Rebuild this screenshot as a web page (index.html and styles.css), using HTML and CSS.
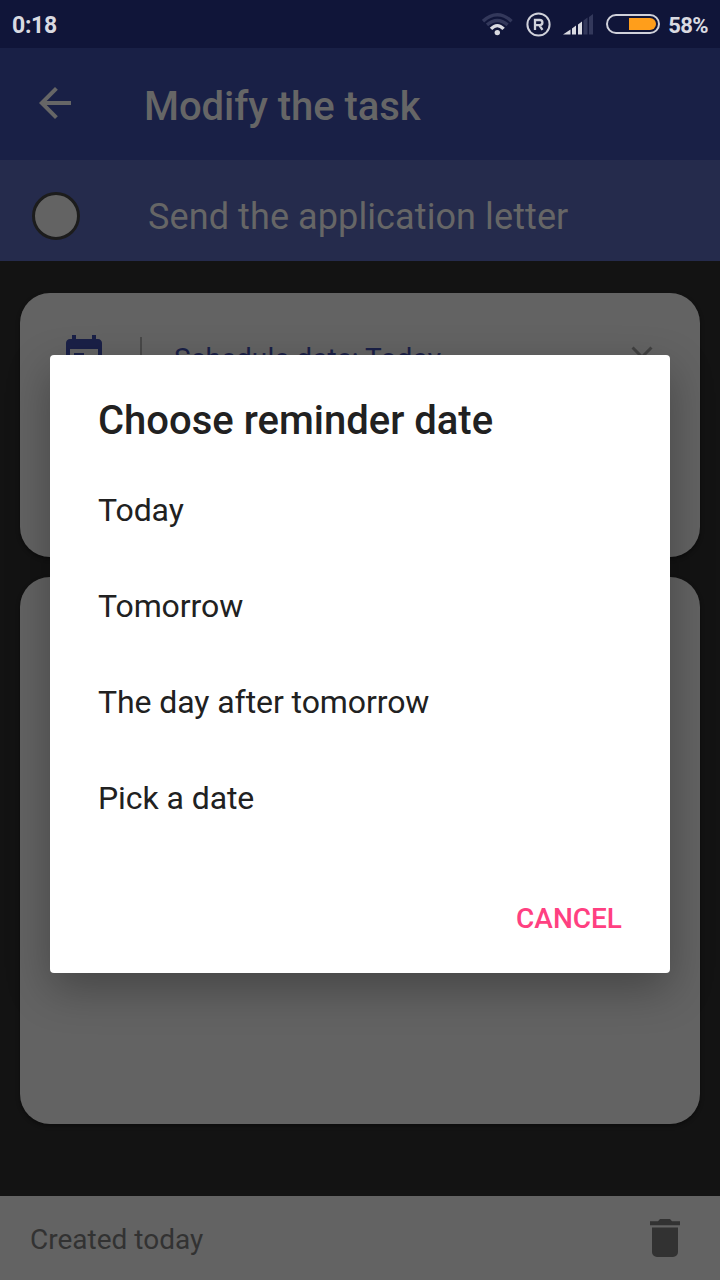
FILE: index.html
```html
<!DOCTYPE html>
<html lang="en">
<head>
<meta charset="utf-8">
<title>Modify the task</title>
<link rel="stylesheet" href="styles.css">
</head>
<body>
<div class="screen">
  <header class="status">
    <span class="clock">0:18</span>
    <div class="indicators">
      <svg class="wifi" width="32" height="24" viewBox="0 0 32 24">
        <g fill="none" stroke-width="3.4">
          <path d="M1 9.200Q15.300-3.600 29.600 9.200" stroke="#33385b"/>
          <path d="M5 12.900Q15.300 4.300 25.600 12.900" stroke="#33385b"/>
          <path d="M9 16.900Q15.300 10.300 21.600 16.900" stroke="#d9dae1"/>
        </g>
        <circle cx="15.300" cy="20.600" r="2.700" fill="#d9dae1"/>
      </svg>
      <svg class="registered" width="26" height="26" viewBox="0 0 26 26" fill="none" stroke="#d0d1da">
        <circle cx="12.500" cy="13.500" r="11.100" stroke-width="2"/>
        <path d="M9 18.900V9h4.700q2.700 0 2.700 2.600t-2.700 2.600H9M13.200 14.200l3.300 4.700" stroke-width="2.300"/>
      </svg>
      <svg class="signal" width="31" height="21" viewBox="0 0 31 21">
        <path d="M0 20.500L7.500 15.500v5zM9 14.500l4-3v9H9zM15 10.500l4-3v13h-4z" fill="#d9dae1"/>
        <path d="M20.500 6.500l4-3v17h-4zM26 3l4-3v20.500h-4z" fill="#33385b"/>
      </svg>
      <svg class="battery" width="54" height="20" viewBox="0 0 54 20">
        <rect x="1" y="1" width="52" height="18" rx="9" fill="none" stroke="#d0d1da" stroke-width="2"/>
        <path d="M23 4h21a6 6 0 0 1 0 12H23z" fill="#ff9e1b"/>
      </svg>
      <span class="percent">58%</span>
    </div>
  </header>
  <div class="appbar">
    <svg class="back" width="48" height="48" viewBox="0 0 24 24"><path fill="#666" d="M20 11H7.830l5.590-5.590L12 4l-8 8 8 8 1.410-1.410L7.830 13H20v-2z"/></svg>
    <h1 class="heading">Modify the task</h1>
  </div>
  <div class="task">
    <span class="check"></span>
    <span class="task-name">Send the application letter</span>
  </div>
  <main class="content">
    <section class="card card-dates">
      <svg class="calendar" width="48" height="48" viewBox="0 0 24 24"><path fill="#1a2047" d="M19 3h-1V1h-2v2H8V1H6v2H5c-1.110 0-2 .9-2 2v14c0 1.100.89 2 2 2h14c1.100 0 2-.9 2-2V5c0-1.100-.9-2-2-2zm0 16H5V8h14v11zM7 10h5v5H7z"/></svg>
      <span class="divider"></span>
      <span class="schedule">Schedule date: Today</span>
      <svg class="clear" width="36" height="36" viewBox="0 0 24 24"><path fill="#414141" d="M19 6.410L17.590 5 12 10.590 6.410 5 5 6.410 10.590 12 5 17.590 6.410 19 12 13.410 17.590 19 19 17.590 13.410 12z"/></svg>
    </section>
    <section class="card card-notes"></section>
  </main>
  <footer class="footer">
    <span>Created today</span>
    <svg class="trash" width="30" height="38" viewBox="0 0 30 38" fill="#323232"><path d="M0 2.300h8L10 0h10l2 2.300h8v4H0zM2 8.600h26V33a5 5 0 0 1-5 5H7a5 5 0 0 1-5-5z"/></svg>
  </footer>
  <div class="dialog" role="dialog">
    <h2 class="dialog-title">Choose reminder date</h2>
    <ul class="options">
      <li>Today</li>
      <li>Tomorrow</li>
      <li>The day after tomorrow</li>
      <li>Pick a date</li>
    </ul>
    <button class="cancel">CANCEL</button>
  </div>
</div>
</body>
</html>
```
FILE: styles.css
```css
* { box-sizing: border-box; }
body { margin: 0; font-family: Roboto, "Liberation Sans", sans-serif; }
.screen {
  position: relative;
  display: flex;
  flex-direction: column;
  width: 720px;
  height: 1280px;
  background: #131313;
  overflow: hidden;
}
.status {
  height: 48px;
  display: flex;
  align-items: center;
  justify-content: space-between;
  padding: 2px 12px 0;
  background: #101539;
  color: #d9dae1;
  font-size: 23px;
  font-weight: 700;
}
.clock { letter-spacing: -.3px; }
.indicators { display: flex; align-items: center; }
.indicators svg { margin-bottom: 2px; }
.wifi { margin-right: 12px; }
.registered { margin-right: 11px; }
.signal { margin-right: 12px; }
.battery { margin-right: 8px; }
.percent { font-size: 22px; letter-spacing: -.6px; }
.appbar {
  height: 112px;
  display: flex;
  align-items: center;
  padding: 0 31px;
  background: #192046;
}
.back { margin: 0 65px 2px 0; }
.heading { margin: 6px 0 0; color: #666; font-size: 40px; font-weight: 500; line-height: 48px; letter-spacing: -.05px; }
.task {
  height: 101px;
  display: flex;
  align-items: center;
  padding: 11px 32px 0;
  background: #252b4c;
}
.check {
  width: 48px;
  height: 48px;
  margin-right: 68px;
  border: 3px solid #1c1c1c;
  border-radius: 50%;
  background: #636363;
}
.task-name { padding-top: 2px; color: #666; font-size: 36px; line-height: 44px; letter-spacing: .1px; }
.content {
  flex: 1;
  display: flex;
  flex-direction: column;
  gap: 20px;
  padding: 32px 20px 0;
}
.card { border-radius: 30px; background: #636363; box-shadow: 0 2px 4px rgba(0, 0, 0, .4); }
.card-dates { height: 264px; display: flex; align-items: flex-start; padding: 40px; }
.card-notes { height: 547px; }
.divider { width: 2px; height: 44px; margin: 4px 32px 0 32px; background: #484848; }
.schedule { flex: 1; margin-top: 9px; color: #1a2047; font-size: 28px; line-height: 34px; letter-spacing: .1px; }
.clear { margin: 6px 0 0; }
.footer {
  height: 84px;
  display: flex;
  align-items: center;
  justify-content: space-between;
  padding: 2px 40px 0 30px;
  background: #636363;
  color: #323232;
  font-size: 28px;
}
.trash { margin-bottom: 2px; }
.dialog {
  position: absolute;
  left: 50px;
  top: 355px;
  width: 620px;
  height: 618px;
  display: flex;
  flex-direction: column;
  padding: 42px 48px 30px;
  border-radius: 4px;
  background: #fff;
  box-shadow: 0 16px 44px rgba(0, 0, 0, .3);
}
.dialog-title { margin: 0 0 18px; color: #212121; font-size: 40px; font-weight: 500; line-height: 48px; }
.options { margin: 0; padding: 0; list-style: none; color: #212121; font-size: 32px; letter-spacing: -.08px; }
.options li { height: 96px; line-height: 94px; }
.cancel {
  align-self: flex-end;
  margin-top: auto;
  padding: 0;
  border: 0;
  background: none;
  color: #ff4081;
  font: 500 28px/48px Roboto, "Liberation Sans", sans-serif;
}
```
